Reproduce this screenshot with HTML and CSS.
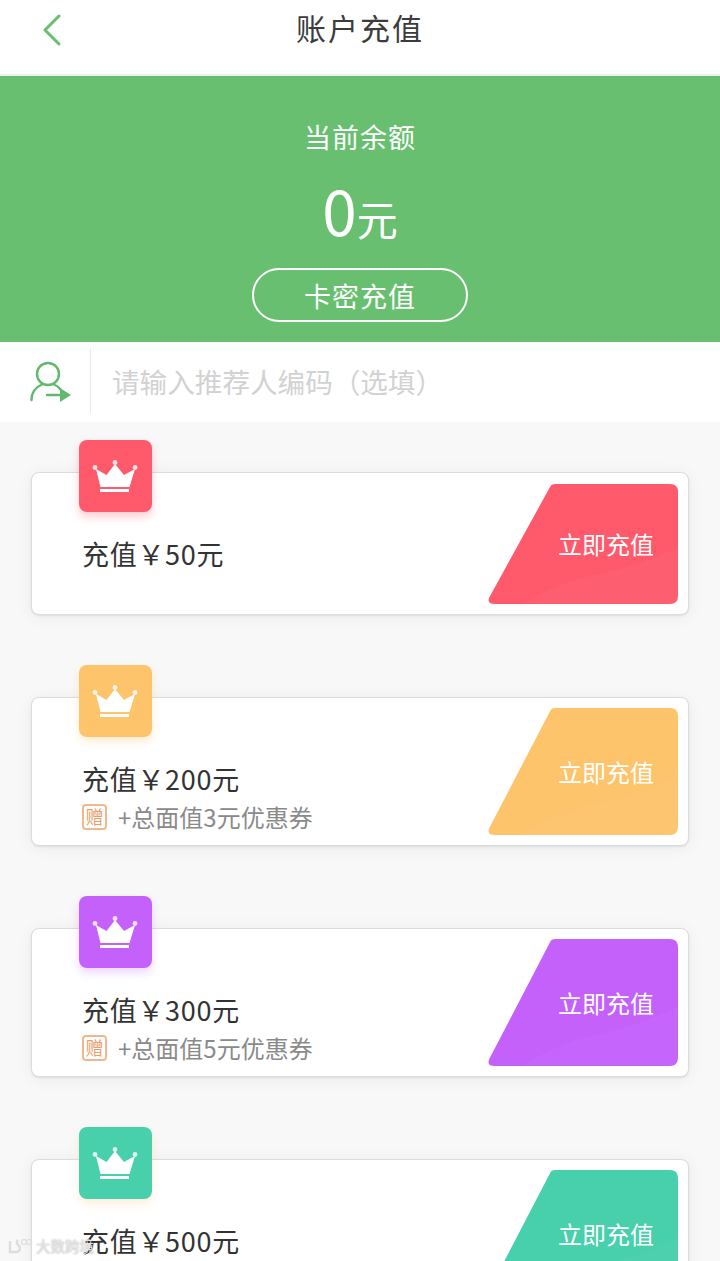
FILE: index.html
```html
<!DOCTYPE html>
<html lang="zh-CN">
<head>
    <meta charset="UTF-8">
    <meta name="viewport" content="width=device-width, initial-scale=1.0">
    <title>账户充值</title>
    <link rel="stylesheet" href="styles.css">
</head>
<body>
    <svg class="defs" width="0" height="0">
        <defs>
            <symbol id="crown" viewBox="0 0 73 72">
                <path d="M17 29 L27.500 35 L36 24 L45 35 L56 29 L50.500 47 H21.500 Z" fill="#fff"/>
                <circle cx="16" cy="27.500" r="2.400" fill="#fff" opacity="0.8"/>
                <circle cx="36" cy="22.500" r="2.400" fill="#fff" opacity="0.8"/>
                <circle cx="56" cy="27.500" r="2.400" fill="#fff" opacity="0.8"/>
                <rect x="21" y="49" width="29" height="3" fill="#fff"/>
            </symbol>
            <symbol id="slant" viewBox="0 0 190 120" preserveAspectRatio="none">
                <path d="M62 3 Q63.500 0 67 0 H182 Q190 0 190 8 V112 Q190 120 182 120 H7 Q-2 120 1.500 113 Z" fill="currentColor"/>
                <path d="M190 64 Q150 82 115 89 Q70 98 35 120 H182 Q190 120 190 112 Z" fill="#fff" opacity="0.03"/>
            </symbol>
        </defs>
    </svg>

    <header class="topbar">
        <a class="back" href="#">
            <svg width="20" height="32" viewBox="0 0 20 32">
                <path d="M17 2 L3 16 L17 30" fill="none" stroke="#68bf70" stroke-width="3" stroke-linecap="round" stroke-linejoin="round"/>
            </svg>
        </a>
        <h1>账户充值</h1>
    </header>

    <section class="balance">
        <p class="balance-label">当前余额</p>
        <p class="balance-value"><span class="num">0</span>元</p>
        <button class="card-btn" type="button">卡密充值</button>
    </section>

    <div class="referrer">
        <svg class="referrer-icon" width="44" height="44" viewBox="0 0 44 44">
            <g fill="none" stroke="#62b86c" stroke-width="2.400" stroke-linecap="round">
                <circle cx="20" cy="14" r="11"/>
                <path d="M3.500 40 C3.500 32 8 27 14 24.500"/>
                <path d="M26 24.500 C28.500 25.500 31 27.500 32.500 29.500"/>
                <path d="M19 35 H33"/>
            </g>
            <path d="M32 28 L43 35 L32 42 Z" fill="#62b86c"/>
        </svg>
        <input class="referrer-input" type="text" placeholder="请输入推荐人编码（选填）">
    </div>

    <main class="plans">
        <article class="plan plan-plain red">
            <div class="badge"><svg width="73" height="72"><use href="#crown"/></svg></div>
            <div class="plan-info">
                <p class="plan-title">充值￥50元</p>
            </div>
            <a class="buy" href="#">
                <svg class="buy-bg"><use href="#slant"/></svg>
                <span>立即充值</span>
            </a>
        </article>

        <article class="plan orange">
            <div class="badge"><svg width="73" height="72"><use href="#crown"/></svg></div>
            <div class="plan-info">
                <p class="plan-title">充值￥200元</p>
                <p class="plan-gift"><span class="gift-tag">赠</span>+总面值3元优惠券</p>
            </div>
            <a class="buy" href="#">
                <svg class="buy-bg"><use href="#slant"/></svg>
                <span>立即充值</span>
            </a>
        </article>

        <article class="plan purple">
            <div class="badge"><svg width="73" height="72"><use href="#crown"/></svg></div>
            <div class="plan-info">
                <p class="plan-title">充值￥300元</p>
                <p class="plan-gift"><span class="gift-tag">赠</span>+总面值5元优惠券</p>
            </div>
            <a class="buy" href="#">
                <svg class="buy-bg"><use href="#slant"/></svg>
                <span>立即充值</span>
            </a>
        </article>

        <article class="plan teal">
            <div class="badge"><svg width="73" height="72"><use href="#crown"/></svg></div>
            <div class="plan-info">
                <p class="plan-title">充值￥500元</p>
            </div>
            <a class="buy" href="#">
                <svg class="buy-bg"><use href="#slant"/></svg>
                <span>立即充值</span>
            </a>
        </article>
    </main>

    <div class="watermark">
        <svg width="24" height="16" viewBox="0 0 24 16">
            <path d="M2 3 V14 H8 C12 14 13 10 11 8 C9 6 8 4 10 2" fill="none" stroke="#ddd" stroke-width="2.500"/>
            <circle cx="16" cy="4" r="2.500" fill="none" stroke="#ddd" stroke-width="1.200"/>
            <circle cx="21" cy="4" r="2.500" fill="none" stroke="#ddd" stroke-width="1.200"/>
        </svg>
        <span>大数跨境</span>
    </div>
</body>
</html>
```

FILE: styles.css
```css
html, body {
    height: 100%;
    overflow: hidden;
}
body {
    position: relative;
    margin: 0;
    background-color: #f8f8f8;
    font-family: "Noto Sans CJK SC", "Noto Sans", sans-serif;
    color: #333;
}
p, h1 {
    margin: 0;
    font-weight: normal;
}
.defs {
    position: absolute;
}

.topbar {
    position: relative;
    box-sizing: border-box;
    height: 76px;
    padding-bottom: 2px;
    display: flex;
    align-items: center;
    justify-content: center;
    background: #fff;
    border-bottom: 2px solid #f0f0f0;
}
.topbar h1 {
    font-size: 30px;
    letter-spacing: 2px;
    line-height: 1;
    margin-top: -18px;
    color: #3c3c3c;
}
.back {
    position: absolute;
    left: 42px;
    top: 14px;
    line-height: 0;
}

.balance {
    height: 266px;
    box-sizing: border-box;
    padding-top: 45px;
    display: flex;
    flex-direction: column;
    align-items: center;
    background-color: #68bf70;
    color: #fff;
}
.balance-label {
    font-size: 27px;
    letter-spacing: 1px;
    line-height: 32px;
}
.balance-value {
    margin-top: 21px;
    font-size: 41px;
    line-height: 70px;
    display: flex;
    align-items: baseline;
}
.balance-value .num {
    font-size: 62px;
}
.card-btn {
    box-sizing: border-box;
    width: 216px;
    height: 54px;
    margin-top: 15px;
    border: 2px solid #fff;
    border-radius: 27px;
    background: none;
    color: #fff;
    font-family: inherit;
    font-size: 27px;
    letter-spacing: 1px;
    padding: 0;
}

.referrer {
    height: 80px;
    display: flex;
    align-items: center;
    background: #fff;
}
.referrer-icon {
    margin-left: 28px;
    margin-right: 18px;
    flex: none;
}
.referrer-input {
    flex: 1;
    height: 64px;
    margin-top: -2px;
    padding: 0 0 0 21px;
    border: none;
    border-left: 1px solid #e8e8e8;
    outline: none;
    background: none;
    font-family: inherit;
    font-size: 27.600px;
}
.referrer-input::placeholder {
    color: #d2d2d2;
}

.plans {
    padding: 50px 31px 0;
    display: flex;
    flex-direction: column;
    gap: 82px;
}
.plan {
    position: relative;
    box-sizing: border-box;
    height: 149px;
    padding: 10px;
    display: flex;
    justify-content: space-between;
    flex: none;
    background: #fff;
    border: 1px solid #dcdcdc;
    border-radius: 8px;
    box-shadow: 0 1px 2px rgba(0, 0, 0, 0.08), 0 2px 16px rgba(0, 0, 0, 0.06);
}
.plan-plain {
    height: 143px;
    padding-top: 11px;
}
.badge {
    position: absolute;
    left: 47px;
    top: -33px;
    width: 73px;
    height: 72px;
    border-radius: 8px;
    line-height: 0;
}
.plan-info {
    padding: 46px 0 0 40px;
}
.plan-title {
    font-size: 27px;
    letter-spacing: 0.700px;
    line-height: 50px;
    color: #333;
}
.plan-plain .plan-title {
    margin-top: -1px;
}
.plan-gift {
    display: flex;
    align-items: center;
    font-size: 24px;
    line-height: 26px;
    color: #8a8a8a;
}
.gift-tag {
    box-sizing: border-box;
    width: 25px;
    height: 26px;
    margin-right: 11px;
    border: 2px solid #f2b78d;
    border-radius: 4px;
    font-size: 18px;
    line-height: 21px;
    text-align: center;
    color: #eba06c;
}
.buy {
    position: relative;
    width: 190px;
    display: flex;
    align-items: center;
    justify-content: flex-end;
    padding-right: 24px;
    box-sizing: border-box;
    font-size: 24px;
    text-decoration: none;
}
.buy-bg {
    position: absolute;
    left: 0;
    top: 0;
    width: 100%;
    height: 100%;
}
.buy span {
    position: relative;
    margin-top: -1px;
    color: #fff;
}

.red .badge { background-color: #fe5a6c; box-shadow: 0 5px 8px rgba(254, 90, 108, 0.3); }
.red .buy { color: #fe5a6c; }
.orange .badge { background-color: #fdc46c; box-shadow: 0 5px 8px rgba(253, 196, 108, 0.3); }
.orange .buy { color: #fdc46c; }
.purple .badge { background-color: #c461fb; box-shadow: 0 5px 8px rgba(196, 97, 251, 0.25); }
.purple .buy { color: #c461fb; }
.teal .badge { background-color: #48cfac; box-shadow: 0 5px 8px rgba(253, 196, 108, 0.25); }
.teal .buy { color: #48cfac; }

.watermark {
    position: absolute;
    left: 8px;
    bottom: 6px;
    display: flex;
    align-items: center;
    gap: 4px;
    color: #e4e4e4;
    font-size: 14.500px;
    line-height: 18px;
    text-shadow: 0 0 2px rgba(0, 0, 0, 0.3);
}
```
